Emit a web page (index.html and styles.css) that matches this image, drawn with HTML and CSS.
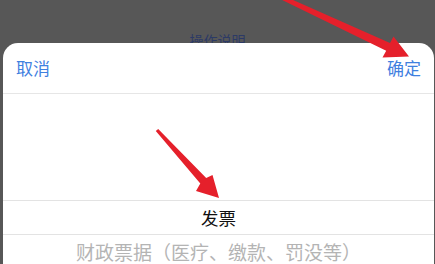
FILE: index.html
```html
<!DOCTYPE html>
<html lang="zh">
<head>
<meta charset="utf-8">
<link rel="stylesheet" href="styles.css">
</head>
<body>
<div class="page">
  <div class="backdrop">
    <div class="behind-title">操作说明</div>
  </div>
  <div class="sheet">
    <div class="toolbar">
      <span class="btn">取消</span>
      <span class="btn">确定</span>
    </div>
    <div class="picker">
      <div class="row row-empty"></div>
      <div class="row row-selected">发票</div>
      <div class="row row-dim">财政票据（医疗、缴款、罚没等）</div>
    </div>
  </div>
  <svg class="arrows" width="435" height="264" viewBox="0 0 435 264">
    <polygon fill="#e5202b" points="282.1,0 386.2,50.7 382.5,57.5 409,56.5 393.5,36.5 390,42.9 284,-4"/>
    <polygon fill="#e5202b" points="155.8,131 200.3,183.5 196,191 219,198 212.5,175 206.2,178 158.2,129"/>
  </svg>
</div>
</body>
</html>
```

FILE: styles.css
```css
* { box-sizing: border-box; }
html, body {
  margin: 0;
  padding: 0;
  width: 435px;
  height: 264px;
  overflow: hidden;
  background: #575757;
  font-family: "Noto Sans CJK SC", "Noto Sans", sans-serif;
}
.page {
  position: relative;
  width: 435px;
  height: 264px;
}
.backdrop {
  height: 43px;
  overflow: hidden;
  background: #575757;
}
.behind-title {
  padding-top: 30px;
  text-align: center;
  font-size: 14px;
  line-height: 20px;
  color: #2c3a66;
}
.sheet {
  margin-left: 3px;
  width: 431px;
  height: 221px;
  background: #ffffff;
  border-radius: 15px 15px 0 0;
  overflow: hidden;
}
.toolbar {
  height: 51px;
  display: flex;
  justify-content: space-between;
  align-items: center;
  padding: 0 13px 0 13px;
  border-bottom: 1px solid #e6e6e6;
}
.btn {
  font-size: 17px;
  line-height: 20px;
  color: #3f80df;
}
.picker {
  display: flex;
  flex-direction: column;
}
.row {
  display: flex;
  justify-content: center;
  align-items: center;
}
.row-empty {
  height: 107px;
  border-bottom: 1px solid #e3e3e3;
}
.row-selected {
  height: 34px;
  font-size: 17.5px;
  color: #111111;
  border-bottom: 1px solid #e3e3e3;
}
.row-dim {
  height: 34px;
  font-size: 19px;
  color: #b4b4b4;
  align-items: flex-start;
  padding-top: 6px;
  line-height: 22px;
}
.arrows {
  position: absolute;
  left: 0;
  top: 0;
}
```
